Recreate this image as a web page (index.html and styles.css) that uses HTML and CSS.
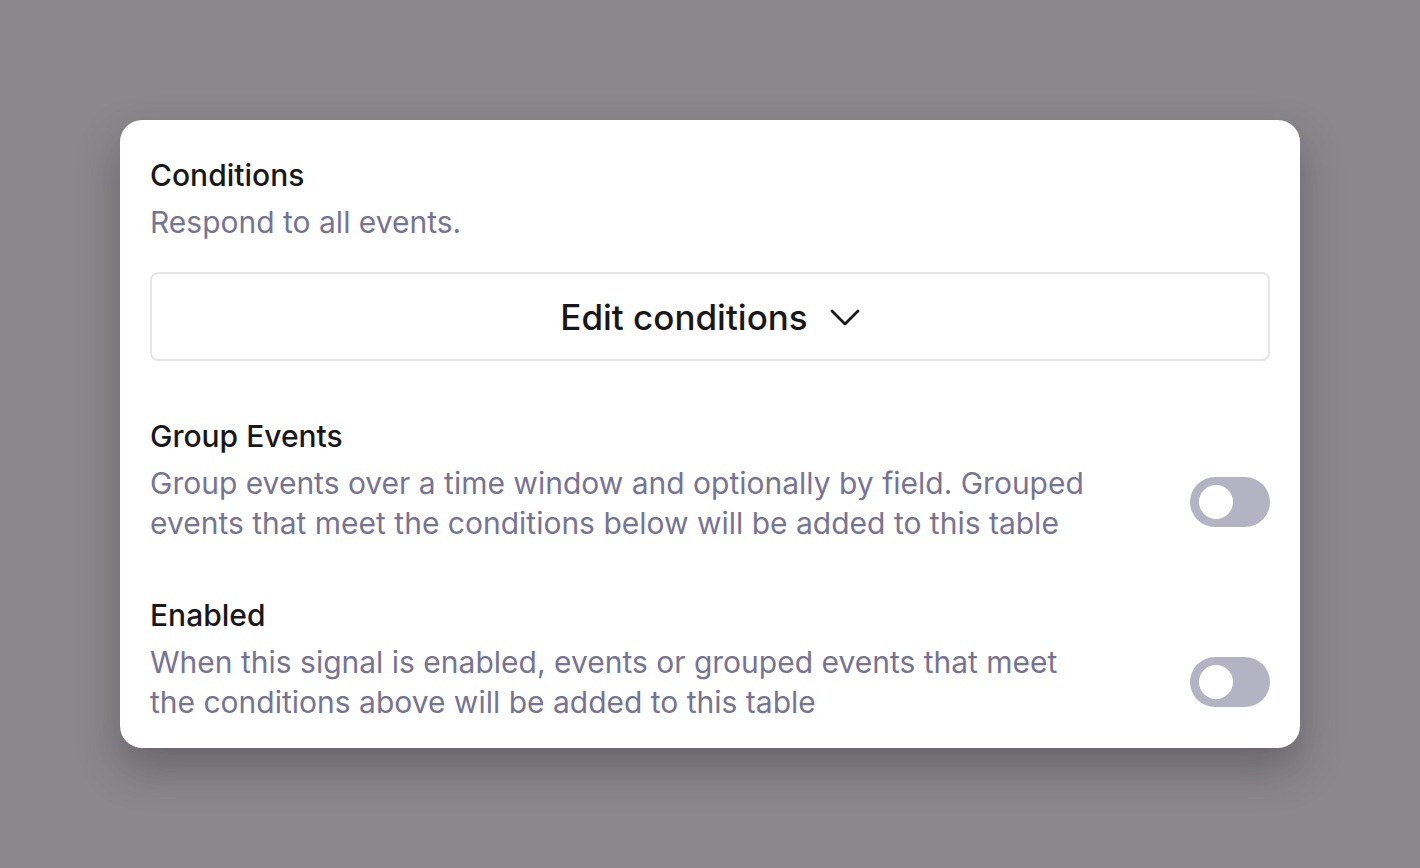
FILE: index.html
```html
<!DOCTYPE html>
<html>
<head>
<meta charset="utf-8">
<link rel="stylesheet" href="styles.css">
</head>
<body>
<div class="card">
  <div class="title">Conditions</div>
  <div class="desc">Respond to all events.</div>
  <button class="edit">
    <span>Edit conditions</span>
    <svg class="chev" width="30" height="17" viewBox="0 0 30 17" fill="none" stroke="#18181b" stroke-width="2.8" stroke-linecap="round" stroke-linejoin="round"><path d="M2 2l13 13 13-13"/></svg>
  </button>
  <div class="row group">
    <div class="text">
      <div class="title">Group Events</div>
      <div class="desc">Group events over a time window and optionally by field. Grouped events that meet the conditions below will be added to this table</div>
    </div>
    <div class="toggle"><div class="knob"></div></div>
  </div>
  <div class="row enabled">
    <div class="text">
      <div class="title">Enabled</div>
      <div class="desc">When this signal is enabled, events or grouped events that meet the conditions above will be added to this table</div>
    </div>
    <div class="toggle"><div class="knob"></div></div>
  </div>
</div>
</body>
</html>
```
FILE: styles.css
```css
html, body {
  margin: 0;
  height: 100%;
}
body {
  background: #8a888c;
  font-family: Inter, "Noto Sans", sans-serif;
  display: flex;
  justify-content: center;
  padding-top: 120px;
  box-sizing: border-box;
}
.card {
  width: 1180px;
  height: 628px;
  box-sizing: border-box;
  background: #ffffff;
  border-radius: 22px;
  padding: 35px 30px 25px 30px;
  box-shadow: 0 20px 40px rgba(40, 38, 44, 0.35);
  display: flex;
  flex-direction: column;
}
.title {
  font-size: 30px;
  line-height: 40px;
  font-weight: 500;
  color: #18181b;
}
.desc {
  margin-top: 7px;
  font-size: 30px;
  line-height: 40px;
  color: #767493;
}
.edit {
  margin-top: 30px;
  height: 89px;
  border: 2px solid #e6e5ee;
  border-radius: 8px;
  background: #ffffff;
  display: flex;
  align-items: center;
  justify-content: center;
  gap: 22px;
  font-family: Inter, "Noto Sans", sans-serif;
  font-size: 35px;
  font-weight: 500;
  color: #18181b;
  padding: 0;
}
.chev {
  margin-top: 2px;
}
.row {
  display: flex;
  align-items: flex-start;
  justify-content: space-between;
}
.row.group {
  margin-top: 55px;
}
.row.enabled {
  margin-top: 52px;
}
.text {
  width: 950px;
}
.toggle {
  width: 80px;
  height: 50px;
  border-radius: 25px;
  background: #b4b3c3;
  display: flex;
  align-items: center;
  padding-left: 9px;
  box-sizing: border-box;
  margin-top: 61px;
}
.enabled .toggle {
  margin-top: 62px;
}
.knob {
  width: 34px;
  height: 34px;
  border-radius: 50%;
  background: #ffffff;
}
```
